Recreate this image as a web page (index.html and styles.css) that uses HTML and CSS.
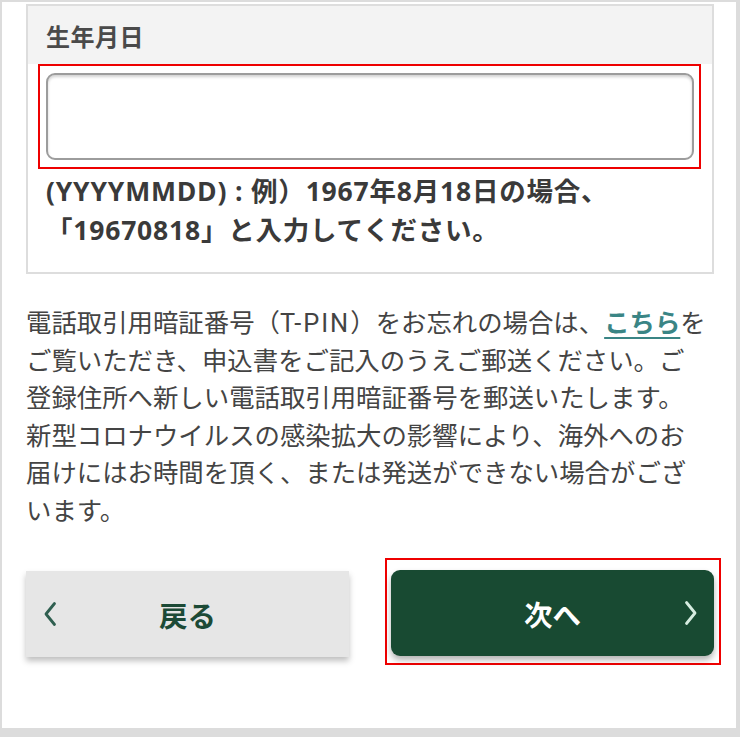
FILE: index.html
```html
<!DOCTYPE html>
<html lang="ja">
<head>
<meta charset="utf-8">
<title>生年月日</title>
<link rel="stylesheet" href="styles.css">
</head>
<body>
<div class="panel">
  <section class="card">
    <div class="card-label">生年月日</div>
    <div class="card-body">
      <div class="mark mark-input">
        <input class="field" type="text" aria-label="生年月日">
      </div>
      <p class="hint">(YYYYMMDD) : 例）1967年8月18日の場合、<br>「19670818」と入力してください。</p>
    </div>
  </section>
  <p class="note">電話取引用暗証番号（<span class="abbr">T-PIN</span>）をお忘れの場合は、<a class="link" href="#">こちら</a>を<br>ご覧いただき、申込書をご記入のうえご郵送ください。ご<br>登録住所へ新しい電話取引用暗証番号を郵送いたします。<br>新型コロナウイルスの感染拡大の影響により、海外へのお<br>届けにはお時間を頂く、または発送ができない場合がござ<br>います。</p>
  <div class="actions">
    <button class="btn btn-back" type="button">
      <svg class="chev chev-left" viewBox="0 0 14 26" width="14" height="26"><path d="M11.5 2.5 L3 13 L11.5 23.5" fill="none" stroke="currentColor" stroke-width="2.8" stroke-linecap="round" stroke-linejoin="round"/></svg>
      <span>戻る</span>
    </button>
    <div class="mark mark-next">
      <button class="btn btn-next" type="button">
        <span>次へ</span>
        <svg class="chev chev-right" viewBox="0 0 14 26" width="14" height="26"><path d="M2.5 2.5 L11 13 L2.5 23.5" fill="none" stroke="currentColor" stroke-width="2.8" stroke-linecap="round" stroke-linejoin="round"/></svg>
      </button>
    </div>
  </div>
</div>
</body>
</html>
```
FILE: styles.css
```css
* { box-sizing: border-box; }
html, body { margin: 0; padding: 0; }
body {
  background: #dcdcdc;
  font-family: Roboto, "Noto Sans CJK JP", "Noto Sans", sans-serif;
  width: 740px;
  height: 737px;
  overflow: hidden;
}
.panel {
  margin: 2px 4px 0 2px;
  height: 726px;
  background: #ffffff;
  padding: 2px 22px 0 24px;
}
.card {
  border: 2px solid #dddddd;
  background: #ffffff;
}
.card-label {
  background: #f3f3f3;
  height: 58px;
  display: flex;
  align-items: center;
  padding-left: 18px;
  font-size: 24px;
  font-weight: 700;
  color: #4a4a4a;
  letter-spacing: 0.5px;
}
.card-body {
  padding: 0 11px 22px 10px;
}
.mark {
  border: 2px solid #ee0000;
}
.mark-input {
  padding: 7px 5px 7px 6px;
}
.field {
  display: block;
  width: 100%;
  height: 87px;
  border: 2px solid #9c9c9c;
  border-radius: 9px;
  background: #ffffff;
  box-shadow: inset 0 2px 3px rgba(0,0,0,0.18);
  outline: none;
}
.hint {
  margin: 3px 0 0 8px;
  font-family: "Open Sans", "Noto Sans CJK JP", sans-serif;
  font-size: 26.5px;
  line-height: 39px;
  letter-spacing: 0.8px;
  font-weight: 700;
  color: #3a3a3a;
  white-space: nowrap;
}
.note {
  margin: 31px 0 0 0;
  font-size: 25.4px;
  line-height: 37.5px;
  color: #444444;
  white-space: nowrap;
}
.abbr {
  letter-spacing: 2px;
}
.link {
  color: #3a8585;
  font-weight: 700;
  text-decoration: underline;
  text-underline-offset: 5px;
  text-decoration-thickness: 2px;
}
.actions {
  margin-top: 28px;
  margin-right: -7px;
  display: flex;
  justify-content: space-between;
  align-items: flex-start;
}
.btn {
  position: relative;
  width: 323px;
  height: 86px;
  border: none;
  display: flex;
  align-items: center;
  justify-content: center;
  font-family: inherit;
  font-size: 28.5px;
  font-weight: 700;
  padding: 0;
  cursor: pointer;
}
.btn-back {
  margin-top: 13px;
  background: #e6e6e6;
  color: #1c4a36;
  box-shadow: 0 4px 6px rgba(0,0,0,0.25);
}
.btn-next {
  background: #184a32;
  color: #ffffff;
  border-radius: 9px;
  box-shadow: 0 4px 6px rgba(0,0,0,0.3);
}
.mark-next {
  padding: 10px 5px 7px 4px;
}
.chev {
  position: absolute;
  top: 50%;
  transform: translateY(-50%);
}
.chev-left {
  left: 17px;
  color: #2f5f50;
}
.chev-right {
  right: 16px;
  color: #d6ece0;
}
```
